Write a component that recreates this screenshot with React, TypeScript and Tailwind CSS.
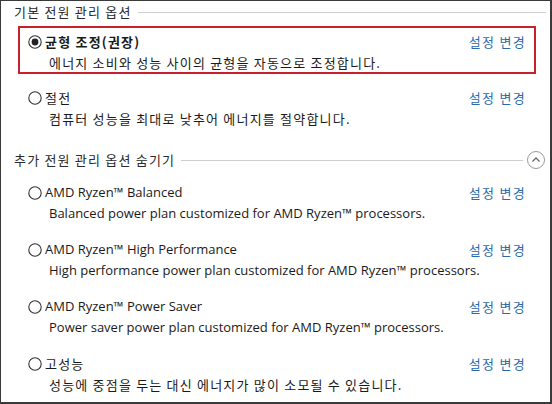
import React from "react";

const FONT = { fontFamily: '"Noto Sans CJK KR", "Noto Sans", sans-serif' };
const LATIN = { fontFamily: '"Open Sans", "Noto Sans CJK KR", sans-serif' };

function Radio({ checked }: { checked?: boolean }) {
  return (
    <svg width="14" height="14" viewBox="0 0 14 14" className="shrink-0">
      <circle cx="7" cy="7" r="6.2" fill="white" stroke="#333" strokeWidth="1.1" />
      {checked && <circle cx="7" cy="7" r="3.4" fill="#222" />}
    </svg>
  );
}

function Heading({ text, collapse }: { text: string; collapse?: boolean }) {
  return (
    <div className="flex items-center h-[22px] pl-[13px] pr-[4px]">
      <span className="text-[13px] text-[#2a2a2a] whitespace-nowrap tracking-[1.2px]">{text}</span>
      <div className="flex-1 h-px bg-[#cfcfcf] ml-[6px]" />
      {collapse && (
        <svg width="20" height="20" viewBox="0 0 20 20" className="shrink-0 ml-[3px]">
          <circle cx="10" cy="10" r="8.5" fill="white" stroke="#9a9a9a" strokeWidth="1" />
          <path d="M6.5 11.5 L10 8 L13.5 11.5" fill="none" stroke="#6a6a6a" strokeWidth="1.3" />
        </svg>
      )}
    </div>
  );
}

function Option({
  title,
  desc,
  checked,
  bold,
  latin,
}: {
  title: string;
  desc: string;
  checked?: boolean;
  bold?: boolean;
  latin?: boolean;
}) {
  const cls = latin ? "text-[13px] tracking-[0px]" : "text-[13px] tracking-[1.2px]";
  const st = latin ? LATIN : undefined;
  return (
    <div className="flex flex-col">
      <div className="flex items-center h-[20px]">
        <div className="w-[27px]" />
        <Radio checked={checked} />
        <span
          className={`ml-[3px] text-[#1a1a1a] whitespace-nowrap ${cls} ${bold ? "font-bold" : ""}`}
          style={st}
        >
          {title}
        </span>
        <div className="flex-1" />
        <span className="text-[13px] text-[#2a6aab] mr-[24px] tracking-[1.3px]">설정 변경</span>
      </div>
      <div
        className={`h-[21px] flex items-center pl-[48px] text-[#1a1a1a] whitespace-nowrap ${cls}`}
        style={st}
      >
        {desc}
      </div>
    </div>
  );
}

export default function App() {
  return (
    <div
      className="w-[552px] h-[404px] bg-white border-l border-t border-r-2 border-b-2 border-[#3a3a3a] overflow-hidden flex flex-col"
      style={FONT}
    >
      <Heading text="기본 전원 관리 옵션" />
      <div className="mt-[3px] ml-[17px] mr-[14px] border-2 border-[#c8202f] h-[48px] pt-[4px]">
        <div className="-ml-[19px] -mr-[16px]">
          <Option
            checked
            bold
            title="균형 조정(권장)"
            desc="에너지 소비와 성능 사이의 균형을 자동으로 조정합니다."
          />
        </div>
      </div>
      <div className="mt-[14px]">
        <Option title="절전" desc="컴퓨터 성능을 최대로 낮추어 에너지를 절약합니다." />
      </div>
      <div className="mt-[20px]">
        <Heading text="추가 전원 관리 옵션 숨기기" collapse />
      </div>
      <div className="mt-[12px] flex flex-col gap-[16px]">
        <Option
          latin
          title="AMD Ryzen™ Balanced"
          desc="Balanced power plan customized for AMD Ryzen™ processors."
        />
        <Option
          latin
          title="AMD Ryzen™ High Performance"
          desc="High performance power plan customized for AMD Ryzen™ processors."
        />
        <Option
          latin
          title="AMD Ryzen™ Power Saver"
          desc="Power saver power plan customized for AMD Ryzen™ processors."
        />
        <Option title="고성능" desc="성능에 중점을 두는 대신 에너지가 많이 소모될 수 있습니다." />
      </div>
    </div>
  );
}
